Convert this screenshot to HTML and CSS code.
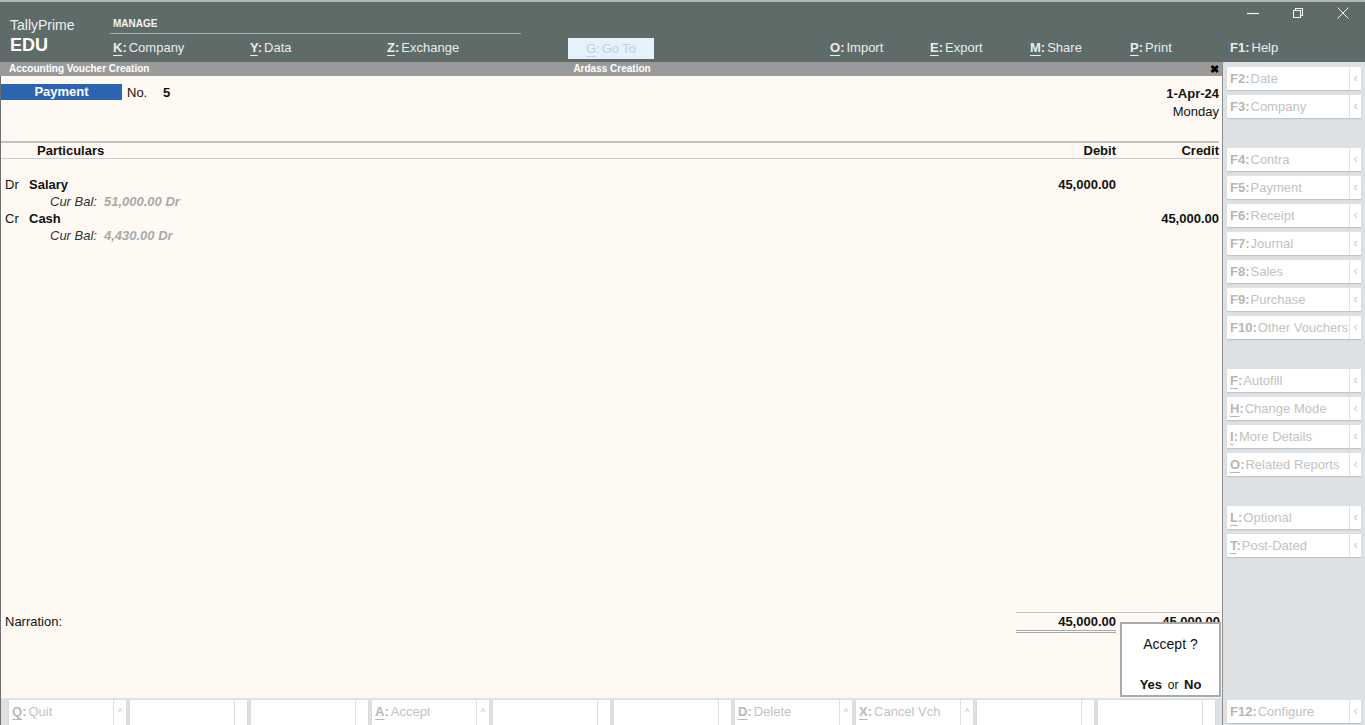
FILE: index.html
```html
<!DOCTYPE html>
<html lang="en">
<head>
<meta charset="utf-8">
<title>TallyPrime - Accounting Voucher Creation</title>
<link rel="stylesheet" href="styles.css">
</head>
<body>
<div class="app">
  <header class="topbar">
    <div class="brand">
      <div class="brand-name">TallyPrime</div>
      <div class="brand-edu">EDU</div>
    </div>
    <div class="topmain">
      <div class="toprow">
        <div class="group-label">MANAGE</div>
        <div class="winctl">
          <span class="wc"><svg width="14" height="14" viewBox="0 0 14 14"><path d="M1 7.5h12" stroke="#f2f2f2" stroke-width="1.2" fill="none"/></svg></span>
          <span class="wc"><svg width="14" height="14" viewBox="0 0 14 14"><path d="M2.5 4.5h7v7h-7z M4.5 4.5v-2h7v7h-2" stroke="#f2f2f2" stroke-width="1.1" fill="none"/></svg></span>
          <span class="wc"><svg width="14" height="14" viewBox="0 0 14 14"><path d="M1.5 1.5l11 11M12.5 1.5l-11 11" stroke="#f2f2f2" stroke-width="1" fill="none"/></svg></span>
        </div>
      </div>
      <nav class="menurow">
        <span class="mitem w137"><span class="key"><u>K</u>:</span>Company</span>
        <span class="mitem w137"><span class="key"><u>Y</u>:</span>Data</span>
        <span class="mitem w137"><span class="key"><u>Z</u>:</span>Exchange</span>
        <span class="goto"><span class="key"><u>G</u>:</span>Go To</span>
        <span class="mitem w100 first-right"><span class="key"><u>O</u>:</span>Import</span>
        <span class="mitem w100"><span class="key"><u>E</u>:</span>Export</span>
        <span class="mitem w100"><span class="key"><u>M</u>:</span>Share</span>
        <span class="mitem w100"><span class="key"><u>P</u>:</span>Print</span>
        <span class="mitem"><span class="key">F1:</span>Help</span>
      </nav>
    </div>
  </header>

  <div class="workarea">
    <div class="leftcol">
      <div class="subbar">
        <span class="sub-left">Accounting Voucher Creation</span>
        <span class="sub-center">Ardass Creation</span>
        <span class="sub-close">&#x2716;</span>
      </div>

      <main class="voucher">
        <div class="vhead">
          <div class="vtype">
            <span class="vtype-name">Payment</span>
            <span class="vno-label">No.</span>
            <span class="vno">5</span>
          </div>
          <div class="vdate">
            <div class="date">1-Apr-24</div>
            <div class="day">Monday</div>
          </div>
        </div>

        <div class="colhead grid">
          <span class="ch-part">Particulars</span>
          <span class="amt">Debit</span>
          <span class="amt">Credit</span>
        </div>

        <div class="entries">
          <div class="grid row">
            <span class="ledger"><span class="drcr">Dr</span><b>Salary</b></span>
            <span class="amt">45,000.00</span>
            <span class="amt"></span>
          </div>
          <div class="grid row">
            <span class="curbal"><i>Cur Bal:</i><span class="balval">51,000.00 Dr</span></span>
            <span></span><span></span>
          </div>
          <div class="grid row">
            <span class="ledger"><span class="drcr">Cr</span><b>Cash</b></span>
            <span class="amt"></span>
            <span class="amt">45,000.00</span>
          </div>
          <div class="grid row">
            <span class="curbal"><i>Cur Bal:</i><span class="balval">4,430.00 Dr</span></span>
            <span></span><span></span>
          </div>
        </div>

        <div class="vfooter">
          <div class="grid totals">
            <span class="narr">Narration:</span>
            <span class="amt tot-dr">45,000.00</span>
            <span class="amt tot-cr">45,000.00</span>
          </div>
        </div>

        <div class="popup">
          <div class="pq">Accept ?</div>
          <div class="pa"><b>Yes</b> <span class="or">or</span> <b>No</b></div>
        </div>
      </main>

      <footer class="bottombar">
        <div class="bbtn"><span class="blabel"><span class="key"><u>Q</u>:</span>Quit</span><span class="barrow">^</span></div>
        <div class="bbtn"><span class="blabel"></span><span class="barrow"></span></div>
        <div class="bbtn"><span class="blabel"></span><span class="barrow"></span></div>
        <div class="bbtn"><span class="blabel"><span class="key"><u>A</u>:</span>Accept</span><span class="barrow">^</span></div>
        <div class="bbtn"><span class="blabel"></span><span class="barrow"></span></div>
        <div class="bbtn"><span class="blabel"></span><span class="barrow"></span></div>
        <div class="bbtn"><span class="blabel"><span class="key"><u>D</u>:</span>Delete</span><span class="barrow">^</span></div>
        <div class="bbtn"><span class="blabel"><span class="key"><u>X</u>:</span>Cancel Vch</span><span class="barrow">^</span></div>
        <div class="bbtn"><span class="blabel"></span><span class="barrow"></span></div>
        <div class="bbtn"><span class="blabel"></span><span class="barrow"></span></div>
      </footer>
    </div>

    <aside class="sidepanel">
      <div class="sbtn"><span class="slabel"><span class="key">F2:</span>Date</span><span class="sarrow">&#x2039;</span></div>
      <div class="sbtn"><span class="slabel"><span class="key">F3:</span>Company</span><span class="sarrow">&#x2039;</span></div>

      <div class="sbtn gap"><span class="slabel"><span class="key">F4:</span>Contra</span><span class="sarrow">&#x2039;</span></div>
      <div class="sbtn"><span class="slabel"><span class="key">F5:</span>Payment</span><span class="sarrow">&#x2039;</span></div>
      <div class="sbtn"><span class="slabel"><span class="key">F6:</span>Receipt</span><span class="sarrow">&#x2039;</span></div>
      <div class="sbtn"><span class="slabel"><span class="key">F7:</span>Journal</span><span class="sarrow">&#x2039;</span></div>
      <div class="sbtn"><span class="slabel"><span class="key">F8:</span>Sales</span><span class="sarrow">&#x2039;</span></div>
      <div class="sbtn"><span class="slabel"><span class="key">F9:</span>Purchase</span><span class="sarrow">&#x2039;</span></div>
      <div class="sbtn"><span class="slabel"><span class="key">F10:</span>Other Vouchers</span><span class="sarrow">&#x2039;</span></div>

      <div class="sbtn gap"><span class="slabel"><span class="key"><u>F</u>:</span>Autofill</span><span class="sarrow">&#x2039;</span></div>
      <div class="sbtn"><span class="slabel"><span class="key"><u>H</u>:</span>Change Mode</span><span class="sarrow">&#x2039;</span></div>
      <div class="sbtn"><span class="slabel"><span class="key"><u>I</u>:</span>More Details</span><span class="sarrow">&#x2039;</span></div>
      <div class="sbtn"><span class="slabel"><span class="key"><u>O</u>:</span>Related Reports</span><span class="sarrow">&#x2039;</span></div>

      <div class="sbtn gap"><span class="slabel"><span class="key"><u>L</u>:</span>Optional</span><span class="sarrow">&#x2039;</span></div>
      <div class="sbtn"><span class="slabel"><span class="key"><u>T</u>:</span>Post-Dated</span><span class="sarrow">&#x2039;</span></div>

      <div class="sbtn bottom"><span class="slabel"><span class="key">F12:</span>Configure</span><span class="sarrow">&#x2039;</span></div>
    </aside>
  </div>
</div>
</body>
</html>
```

FILE: styles.css
```css
* { box-sizing: border-box; }

html, body {
  margin: 0;
  padding: 0;
}

body {
  width: 1365px;
  height: 725px;
  overflow: hidden;
  font-family: "Liberation Sans", Arial, sans-serif;
  font-size: 13px;
  color: #111;
  background: #dde1e4;
}

.app {
  display: flex;
  flex-direction: column;
  width: 1365px;
  height: 725px;
}

/* ---------- Top bar ---------- */
.topbar {
  height: 62px;
  flex: none;
  display: flex;
  background: #5f6b69;
  border-top: 2px solid #b3b6b6;
  color: #e9eded;
}

.brand {
  width: 110px;
  flex: none;
  padding: 14px 0 0 10px;
}

.brand-name {
  font-size: 14px;
  line-height: 18px;
  color: #eef1f1;
}

.brand-edu {
  font-size: 18px;
  line-height: 22px;
  font-weight: bold;
  color: #ffffff;
}

.topmain {
  flex: 1;
  display: flex;
  flex-direction: column;
}

.toprow {
  height: 32px;
  display: flex;
  justify-content: space-between;
  align-items: flex-start;
}

.group-label {
  width: 411px;
  height: 32px;
  padding: 15px 0 2px 3px;
  font-size: 10px;
  line-height: 14px;
  font-weight: bold;
  color: #f0f3f3;
  border-bottom: 1px solid #8eb2cf;
}

.winctl {
  display: flex;
  height: 22px;
}

.wc {
  width: 45px;
  height: 22px;
  display: flex;
  align-items: center;
  justify-content: center;
}

.menurow {
  height: 28px;
  display: flex;
  align-items: center;
  padding-left: 3px;
  font-size: 13px;
  white-space: nowrap;
}

.mitem { line-height: 26px; }
.w137 { width: 137px; }
.w100 { width: 100px; }
.first-right { margin-left: 176px; }

.key { font-weight: bold; margin-right: 2px; }
.key u { text-decoration-thickness: 1px; text-underline-offset: 3px; }

.goto {
  margin-left: 44px;
  width: 86px;
  height: 21px;
  line-height: 21px;
  text-align: center;
  background: #e5f1fb;
  color: #c3ced9;
}

.goto .key { font-weight: normal; }

/* ---------- Work area ---------- */
.workarea {
  flex: 1;
  display: flex;
  min-height: 0;
}

.leftcol {
  width: 1222px;
  flex: none;
  display: flex;
  flex-direction: column;
}

.subbar {
  height: 14px;
  flex: none;
  display: grid;
  grid-template-columns: 1fr auto 1fr;
  align-items: center;
  background: #9a9a9a;
  color: #ffffff;
  font-size: 10px;
  font-weight: bold;
  line-height: 14px;
  padding: 0 3px 0 9px;
}

.sub-center { text-align: center; padding-right: 4px; }

.sub-close {
  justify-self: end;
  color: #000;
  font-size: 11px;
}

/* ---------- Voucher ---------- */
.voucher {
  position: relative;
  flex: 1;
  display: flex;
  flex-direction: column;
  background: #fef9f3;
  border-left: 1px solid #6f6f6f;
  padding-right: 3px;
}

.vhead {
  height: 65px;
  flex: none;
  display: flex;
  justify-content: space-between;
  align-items: flex-start;
}

.vtype {
  margin-top: 8px;
  display: flex;
  align-items: center;
  height: 16px;
}

.vtype-name {
  width: 121px;
  height: 16px;
  line-height: 16px;
  text-align: center;
  background: #2c64b1;
  color: #ffffff;
  font-weight: bold;
}

.vno-label { margin-left: 5px; width: 36px; }
.vno { font-weight: bold; }

.vdate {
  padding-top: 9px;
  text-align: right;
  line-height: 18px;
}

.date { font-weight: bold; }

.grid {
  display: grid;
  grid-template-columns: 1fr 100px 103px;
}

.amt {
  text-align: right;
  font-weight: bold;
}

.colhead {
  height: 18px;
  flex: none;
  border-top: 2px solid #c3c3c3;
  border-bottom: 1px solid #cbcbcb;
  line-height: 15px;
  font-weight: bold;
}

.ch-part { padding-left: 36px; }

.entries {
  padding-top: 17px;
}

.row { line-height: 17px; }

.ledger { padding-left: 4px; }

.drcr {
  display: inline-block;
  width: 24px;
  font-weight: normal;
}

.ledger b { font-weight: bold; }

.curbal { padding-left: 49px; }
.curbal i { color: #333; }

.balval {
  margin-left: 7px;
  font-style: italic;
  font-weight: bold;
  color: #a9a9a9;
}

.vfooter {
  margin-top: auto;
  height: 86px;
  flex: none;
}

.totals { line-height: 16px; }

.narr { padding-left: 4px; padding-top: 2px; }

.tot-dr {
  border-top: 1px solid #c6c6c6;
  border-bottom: 3px double #a8a8a8;
  padding-top: 1px;
}

.tot-cr {
  border-top: 1px solid #c6c6c6;
  padding-top: 1px;
  margin-right: -1px;
}

.popup {
  position: absolute;
  right: 1px;
  bottom: 1px;
  width: 101px;
  height: 75px;
  background: #ffffff;
  border: 2px solid #a9a9a9;
  display: flex;
  flex-direction: column;
  align-items: center;
  padding: 11px 0 1px;
}

.pq {
  font-size: 14px;
  line-height: 18px;
}

.pa {
  margin-top: auto;
  line-height: 18px;
  font-size: 13px;
}

.pa .or { font-size: 12px; margin: 0 2px; }

/* ---------- Bottom bar ---------- */
.bottombar {
  height: 27px;
  flex: none;
  display: flex;
  gap: 4px;
  padding: 2px 0 0 8px;
  background: #dde1e4;
  border-left: 1px solid #6f6f6f;
}

.bbtn {
  width: 117px;
  height: 25px;
  display: flex;
  background: #ffffff;
  box-shadow: 0 1px 1px rgba(0, 0, 0, 0.12);
  color: #c3c3c3;
  white-space: nowrap;
}

.blabel {
  flex: 1;
  padding-left: 3px;
  line-height: 24px;
}

.blabel .key { color: #b9b9b9; }

.barrow {
  width: 13px;
  border-left: 1px solid #dfe2e4;
  font-size: 9px;
  line-height: 24px;
  text-align: center;
  color: #bcbcbc;
}

/* ---------- Side panel ---------- */
.sidepanel {
  width: 143px;
  flex: none;
  display: flex;
  flex-direction: column;
  gap: 5px;
  padding: 5px 4px 2px 4px;
  background: #dde1e4;
  border-left: 1px solid #8c8c8c;
}

.sbtn {
  height: 23px;
  flex: none;
  display: flex;
  background: #ffffff;
  box-shadow: 0 1px 1px rgba(0, 0, 0, 0.12);
  color: #c2c2c2;
  white-space: nowrap;
}

.sbtn.gap { margin-top: 25px; }
.sbtn.bottom { margin-top: auto; }

.slabel {
  flex: 1;
  padding-left: 3px;
  line-height: 23px;
  overflow: hidden;
}

.slabel .key { color: #b6b6b6; margin-right: 1px; }

.sarrow {
  width: 12px;
  border-left: 1px solid #e1e4e6;
  text-align: center;
  line-height: 22px;
  font-size: 12px;
  color: #c4c4c4;
}
```
